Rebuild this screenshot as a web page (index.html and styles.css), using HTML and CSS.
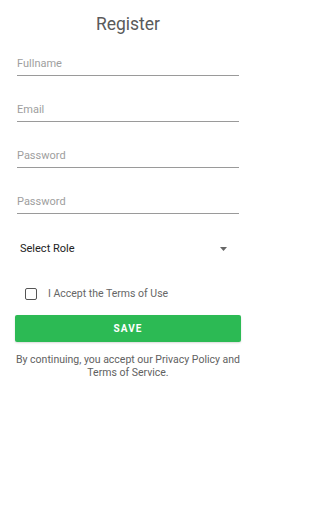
FILE: index.html
```html
<!DOCTYPE html>
<html>
<head>
<meta charset="utf-8">
<link rel="stylesheet" href="styles.css">
</head>
<body>
<div class="page">
  <div class="title">Register</div>
  <div class="fields">
    <div class="field">Fullname</div>
    <div class="field">Email</div>
    <div class="field">Password</div>
    <div class="field">Password</div>
  </div>
  <div class="select">
    <span>Select Role</span>
    <svg class="arrow" width="7" height="4" viewBox="0 0 7 4"><path d="M0 0H7L3.5 4Z" fill="#666"/></svg>
  </div>
  <div class="check">
    <span class="box"></span>
    <span class="check-label">I Accept the Terms of Use</span>
  </div>
  <div class="btn">SAVE</div>
  <p class="note">By continuing, you accept our Privacy Policy and Terms of Service.</p>
</div>
</body>
</html>
```
FILE: styles.css
```css
html, body {
  margin: 0;
  padding: 0;
  background: #fff;
}
body {
  font-family: Roboto, "Noto Sans", sans-serif;
  width: 256px;
  height: 512px;
}
.page {
  display: flex;
  flex-direction: column;
}
.title {
  padding-top: 14px;
  font-size: 17.5px;
  line-height: 20px;
  color: #5a5a5a;
  text-align: center;
  font-weight: 400;
}
.fields {
  display: flex;
  flex-direction: column;
  gap: 27px;
  margin: 23px 17px 0;
}
.field {
  font-size: 11px;
  line-height: 14px;
  color: #9e9e9e;
  padding-bottom: 4px;
  border-bottom: 1px solid #9a9a9a;
}
.select {
  display: flex;
  align-items: center;
  justify-content: space-between;
  margin: 27px 17px 0;
  padding: 0 12px 0 3px;
  font-size: 11px;
  line-height: 15px;
  color: #222;
}
.arrow {
  display: block;
  margin-top: 1px;
}
.check {
  display: flex;
  align-items: center;
  margin: 30px 17px 0;
  padding-left: 8px;
  font-size: 10.5px;
  line-height: 15px;
  color: #666;
}
.box {
  box-sizing: border-box;
  width: 12px;
  height: 12px;
  border: 1.5px solid #555;
  border-radius: 2px;
  margin-right: 11px;
}
.btn {
  margin: 14px 15px 0;
  height: 27px;
  background: #2cba54;
  border-radius: 2px;
  box-shadow: 0 1px 2px rgba(0,0,0,0.15);
  color: #fff;
  font-size: 10px;
  font-weight: 700;
  letter-spacing: 1.1px;
  display: flex;
  align-items: center;
  justify-content: center;
}
.note {
  margin: 11px 12px 0;
  font-size: 10.5px;
  line-height: 13px;
  color: #616161;
  text-align: center;
}
```
